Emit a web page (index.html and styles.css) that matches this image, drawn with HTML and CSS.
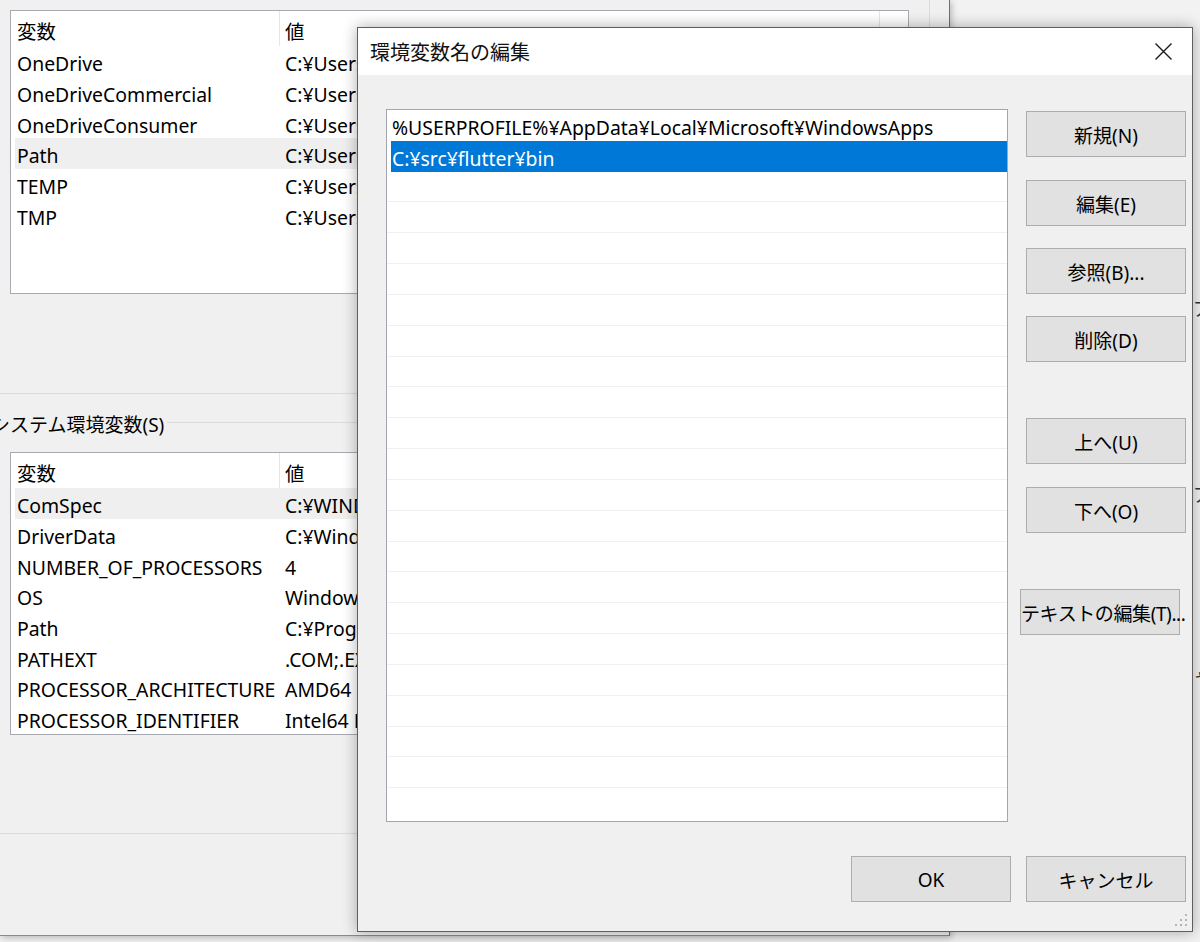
FILE: index.html
```html
<!DOCTYPE html>
<html lang="ja">
<head>
<meta charset="utf-8">
<title>環境変数名の編集</title>
<link rel="stylesheet" href="styles.css">
</head>
<body>
<div class="win win-far">
  <span class="frag f1">ア</span>
  <span class="frag f2">ア</span>
  <span class="frag f3">ャ</span>
</div>

<div class="win win-env">
  <div class="group group-user">
    <div class="listbox lb-user">
      <div class="lv-head"><div class="hc c1">変数</div><div class="hc c2">値</div></div>
      <div class="lv-row"><div class="c1">OneDrive</div><div class="c2">C:¥Users¥user¥OneDrive</div></div>
      <div class="lv-row"><div class="c1">OneDriveCommercial</div><div class="c2">C:¥Users¥user¥OneDrive</div></div>
      <div class="lv-row"><div class="c1">OneDriveConsumer</div><div class="c2">C:¥Users¥user¥OneDrive</div></div>
      <div class="lv-row is-sel"><div class="c1">Path</div><div class="c2">C:¥Users¥user¥AppData¥Local¥Microsoft¥WindowsApps;C:¥src¥flutter¥bin</div></div>
      <div class="lv-row"><div class="c1">TEMP</div><div class="c2">C:¥Users¥user¥AppData¥Local¥Temp</div></div>
      <div class="lv-row"><div class="c1">TMP</div><div class="c2">C:¥Users¥user¥AppData¥Local¥Temp</div></div>
    </div>
  </div>

  <div class="group group-sys">
    <div class="group-head"><span class="group-label">システム環境変数(S)</span><span class="group-line"></span></div>
    <div class="listbox lb-sys">
      <div class="lv-head"><div class="hc c1">変数</div><div class="hc c2">値</div></div>
      <div class="lv-row is-sel"><div class="c1">ComSpec</div><div class="c2">C:¥WINDOWS¥system32¥cmd.exe</div></div>
      <div class="lv-row"><div class="c1">DriverData</div><div class="c2">C:¥Windows¥System32¥Drivers¥DriverData</div></div>
      <div class="lv-row"><div class="c1">NUMBER_OF_PROCESSORS</div><div class="c2">4</div></div>
      <div class="lv-row"><div class="c1">OS</div><div class="c2">Windows_NT</div></div>
      <div class="lv-row"><div class="c1">Path</div><div class="c2">C:¥Program Files¥Common Files¥Oracle¥Java¥javapath</div></div>
      <div class="lv-row"><div class="c1">PATHEXT</div><div class="c2">.COM;.EXE;.BAT;.CMD;.VBS;.VBE;.JS;.JSE;.WSF;.WSH;.MSC</div></div>
      <div class="lv-row"><div class="c1">PROCESSOR_ARCHITECTURE</div><div class="c2">AMD64</div></div>
      <div class="lv-row"><div class="c1">PROCESSOR_IDENTIFIER</div><div class="c2">Intel64 Family 6 Model 142 Stepping 10, GenuineIntel</div></div>
    </div>
  </div>
</div>

<div class="dialog">
  <div class="titlebar">
    <span class="title">環境変数名の編集</span>
    <svg class="close" width="17" height="17" viewBox="0 0 17 17" aria-hidden="true">
      <path d="M0.5 0.5 L16.5 16.5 M16.5 0.5 L0.5 16.5" stroke="#1b1b1b" stroke-width="1.4" fill="none"/>
    </svg>
  </div>
  <div class="dlg-main">
    <div class="pathlist">
      <div class="pl-row"><span>%USERPROFILE%¥AppData¥Local¥Microsoft¥WindowsApps</span></div>
      <div class="pl-row is-active"><span>C:¥src¥flutter¥bin</span></div>
      <div class="pl-row empty"></div>
      <div class="pl-row empty"></div>
      <div class="pl-row empty"></div>
      <div class="pl-row empty"></div>
      <div class="pl-row empty"></div>
      <div class="pl-row empty"></div>
      <div class="pl-row empty"></div>
      <div class="pl-row empty"></div>
      <div class="pl-row empty"></div>
      <div class="pl-row empty"></div>
      <div class="pl-row empty"></div>
      <div class="pl-row empty"></div>
      <div class="pl-row empty"></div>
      <div class="pl-row empty"></div>
      <div class="pl-row empty"></div>
      <div class="pl-row empty"></div>
      <div class="pl-row empty"></div>
      <div class="pl-row empty"></div>
      <div class="pl-row empty"></div>
      <div class="pl-row empty"></div>
      <div class="pl-row empty last"></div>
    </div>
    <div class="btncol">
      <button class="btn b-new">新規(N)</button>
      <button class="btn b-edit">編集(E)</button>
      <button class="btn b-browse">参照(B)...</button>
      <button class="btn b-del">削除(D)</button>
      <button class="btn b-up">上へ(U)</button>
      <button class="btn b-down">下へ(O)</button>
      <button class="btn b-text">テキストの編集(T)...</button>
    </div>
  </div>
  <div class="dlg-foot">
    <button class="btn">OK</button>
    <button class="btn">キャンセル</button>
  </div>
  <svg class="grip" width="14" height="14" viewBox="0 0 14 14" aria-hidden="true">
    <rect x="11" y="1" width="2" height="2" fill="#b4b4b4"/>
    <rect x="6" y="6" width="2" height="2" fill="#b4b4b4"/>
    <rect x="11" y="6" width="2" height="2" fill="#b4b4b4"/>
    <rect x="1" y="11" width="2" height="2" fill="#b4b4b4"/>
    <rect x="6" y="11" width="2" height="2" fill="#b4b4b4"/>
    <rect x="11" y="11" width="2" height="2" fill="#b4b4b4"/>
  </svg>
</div>
</body>
</html>
```

FILE: styles.css
```css
html, body {
  margin: 0;
  padding: 0;
}

body {
  width: 1200px;
  height: 942px;
  overflow: hidden;
  position: relative;
  background: #f0f0f0;
  color: #000;
  font-family: "Noto Sans", "Noto Sans CJK JP", sans-serif;
  font-size: 19.4px;
}

.win {
  position: absolute;
  box-sizing: border-box;
  background: #f0f0f0;
  overflow: hidden;
}

/* window far behind, on the right */
.win-far {
  left: 949px;
  top: 0;
  width: 251px;
  height: 942px;
  background: #f2f2f2;
  display: flex;
  flex-direction: column;
  padding-left: 244px;
}

.frag {
  font-family: "Noto Sans CJK JP", sans-serif;
  font-size: 19px;
  line-height: 22px;
  color: #333;
}

.f1 { margin-top: 297px; }
.f2 { margin-top: 164px; }
.f3 { margin-top: 160px; }

/* environment variables window */
.win-env {
  left: 0;
  top: 0;
  width: 950px;
  height: 936px;
  border-right: 1px solid #6e6e6e;
  border-bottom: 1px solid #8a8a8a;
  box-shadow: 2px 2px 6px rgba(0, 0, 0, 0.22);
  display: flex;
  flex-direction: column;
}

.group {
  box-sizing: border-box;
  margin-left: -10px;
  width: 940px;
  border: 1px solid #dcdcdc;
  flex: none;
}

.group-user {
  border-top: none;
  height: 394px;
  padding: 10px 0 0 19px;
}

.group-sys {
  border-top: none;
  margin-top: 17px;
  padding: 0 0 98px 0;
}

.group-head {
  display: flex;
  align-items: flex-start;
  height: 26px;
}

.group-label {
  font-size: 19px;
  line-height: 26px;
  padding-top: 1px;
  white-space: nowrap;
  flex: none;
}

.group-line {
  flex: 1;
  margin-top: 11px;
  margin-left: 3px;
  border-top: 1px solid #dcdcdc;
}

.listbox {
  box-sizing: border-box;
  width: 899px;
  background: #fff;
  border: 1px solid #a7aab0;
  overflow: hidden;
}

.lb-user {
  height: 284px;
}

.lb-sys {
  margin-top: 15px;
  margin-left: 19px;
  height: 283px;
}

.lv-head {
  display: flex;
  height: 35px;
}

.hc {
  box-sizing: border-box;
  display: flex;
  align-items: center;
  border-right: 1px solid #e5e5e5;
  white-space: nowrap;
  padding-top: 3px;
}

.hc.c1 {
  width: 269px;
  padding-left: 6px;
}

.hc.c2 {
  width: 600px;
  padding-left: 5px;
}

.lv-row {
  display: flex;
  align-items: center;
  height: 30.7px;
  margin-left: 4px;
  padding-top: 5px;
  box-sizing: border-box;
  white-space: nowrap;
}

.lv-row.is-sel {
  background: #efefef;
}

.lv-row .c1 {
  box-sizing: border-box;
  width: 264px;
  flex: none;
  padding-left: 2px;
}

.lv-row .c2 {
  padding-left: 6px;
}

/* edit dialog */
.dialog {
  position: absolute;
  left: 357px;
  top: 27px;
  width: 836px;
  height: 905px;
  box-sizing: border-box;
  border: 1px solid #5f5f5f;
  background: #f0f0f0;
  box-shadow: 0 0 14px rgba(0, 0, 0, 0.32);
  display: flex;
  flex-direction: column;
}

.titlebar {
  height: 47px;
  flex: none;
  background: #fff;
  display: flex;
  align-items: center;
  justify-content: space-between;
  padding-left: 12px;
  padding-right: 20px;
}

.title {
  font-family: "Noto Sans CJK JP", sans-serif;
  font-size: 20px;
  color: #111;
}

.close {
  display: block;
}

.dlg-main {
  display: flex;
  padding: 34px 0 0 28px;
}

.pathlist {
  box-sizing: border-box;
  width: 622px;
  height: 713px;
  background: #fff;
  border: 1px solid #a3a6ac;
  padding-top: 0;
  overflow: hidden;
}

.pl-row {
  height: 30.83px;
  box-sizing: border-box;
  margin-left: 4px;
  display: flex;
  align-items: center;
  padding-left: 1px;
  padding-top: 4px;
  white-space: nowrap;
}

.pl-row.empty {
  border-bottom: 1px solid #f0f0f0;
  margin-left: 0;
}

.pl-row.last {
  border-bottom: none;
}

.pl-row.is-active {
  background: #0078d7;
  color: #fff;
}

.btncol {
  display: flex;
  flex-direction: column;
  margin-left: 18px;
  padding-top: 2px;
  width: 160px;
}

.btn {
  box-sizing: border-box;
  width: 160px;
  height: 46px;
  border: 1px solid #adadad;
  background: #e1e1e1;
  color: #000;
  font-family: "Noto Sans", "Noto Sans CJK JP", sans-serif;
  font-size: 19px;
  padding: 2px 0 0 0;
  margin: 0;
  white-space: nowrap;
}

.b-edit { margin-top: 23px; }
.b-browse { margin-top: 22px; }
.b-del { margin-top: 22px; }
.b-up { margin-top: 56px; }
.b-down { margin-top: 23px; }
.b-text { margin-top: 56px; margin-left: -6px; letter-spacing: -0.4px; }

.dlg-foot {
  display: flex;
  justify-content: flex-end;
  gap: 15px;
  padding-right: 6px;
  margin-top: 34px;
}

.grip {
  position: absolute;
  right: 4px;
  bottom: 4px;
}
```
